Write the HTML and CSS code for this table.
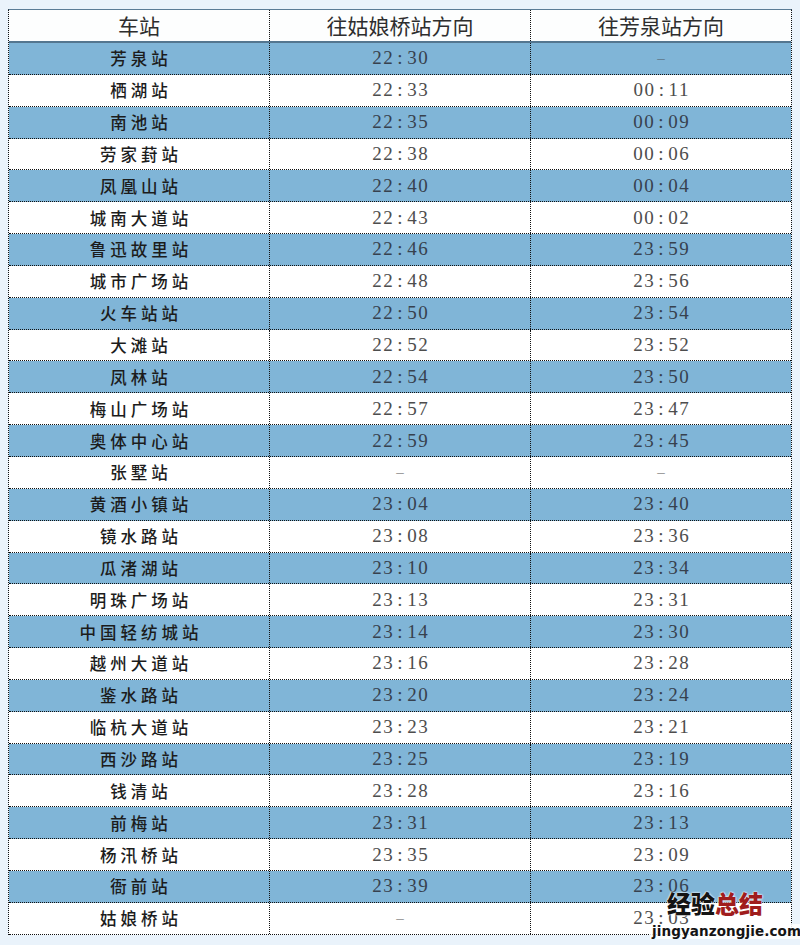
FILE: index.html
```html
<!DOCTYPE html>
<html lang="zh-CN">
<head>
<meta charset="utf-8">
<title>末班车时刻表</title>
<link rel="stylesheet" href="styles.css">
</head>
<body>
<div class="table">
  <div class="row head">
    <div class="cell">车站</div>
    <div class="cell">往姑娘桥站方向</div>
    <div class="cell">往芳泉站方向</div>
  </div>
  <div class="body">
    <div class="row"><div class="cell st">芳泉站</div><div class="cell tm">22<span class="c">:</span>30</div><div class="cell tm dash">–</div></div>
    <div class="row"><div class="cell st">栖湖站</div><div class="cell tm">22<span class="c">:</span>33</div><div class="cell tm">00<span class="c">:</span>11</div></div>
    <div class="row"><div class="cell st">南池站</div><div class="cell tm">22<span class="c">:</span>35</div><div class="cell tm">00<span class="c">:</span>09</div></div>
    <div class="row"><div class="cell st">劳家葑站</div><div class="cell tm">22<span class="c">:</span>38</div><div class="cell tm">00<span class="c">:</span>06</div></div>
    <div class="row"><div class="cell st">凤凰山站</div><div class="cell tm">22<span class="c">:</span>40</div><div class="cell tm">00<span class="c">:</span>04</div></div>
    <div class="row"><div class="cell st">城南大道站</div><div class="cell tm">22<span class="c">:</span>43</div><div class="cell tm">00<span class="c">:</span>02</div></div>
    <div class="row"><div class="cell st">鲁迅故里站</div><div class="cell tm">22<span class="c">:</span>46</div><div class="cell tm">23<span class="c">:</span>59</div></div>
    <div class="row"><div class="cell st">城市广场站</div><div class="cell tm">22<span class="c">:</span>48</div><div class="cell tm">23<span class="c">:</span>56</div></div>
    <div class="row"><div class="cell st">火车站站</div><div class="cell tm">22<span class="c">:</span>50</div><div class="cell tm">23<span class="c">:</span>54</div></div>
    <div class="row"><div class="cell st">大滩站</div><div class="cell tm">22<span class="c">:</span>52</div><div class="cell tm">23<span class="c">:</span>52</div></div>
    <div class="row"><div class="cell st">凤林站</div><div class="cell tm">22<span class="c">:</span>54</div><div class="cell tm">23<span class="c">:</span>50</div></div>
    <div class="row"><div class="cell st">梅山广场站</div><div class="cell tm">22<span class="c">:</span>57</div><div class="cell tm">23<span class="c">:</span>47</div></div>
    <div class="row"><div class="cell st">奥体中心站</div><div class="cell tm">22<span class="c">:</span>59</div><div class="cell tm">23<span class="c">:</span>45</div></div>
    <div class="row"><div class="cell st">张墅站</div><div class="cell tm dash">–</div><div class="cell tm dash">–</div></div>
    <div class="row"><div class="cell st">黄酒小镇站</div><div class="cell tm">23<span class="c">:</span>04</div><div class="cell tm">23<span class="c">:</span>40</div></div>
    <div class="row"><div class="cell st">镜水路站</div><div class="cell tm">23<span class="c">:</span>08</div><div class="cell tm">23<span class="c">:</span>36</div></div>
    <div class="row"><div class="cell st">瓜渚湖站</div><div class="cell tm">23<span class="c">:</span>10</div><div class="cell tm">23<span class="c">:</span>34</div></div>
    <div class="row"><div class="cell st">明珠广场站</div><div class="cell tm">23<span class="c">:</span>13</div><div class="cell tm">23<span class="c">:</span>31</div></div>
    <div class="row"><div class="cell st">中国轻纺城站</div><div class="cell tm">23<span class="c">:</span>14</div><div class="cell tm">23<span class="c">:</span>30</div></div>
    <div class="row"><div class="cell st">越州大道站</div><div class="cell tm">23<span class="c">:</span>16</div><div class="cell tm">23<span class="c">:</span>28</div></div>
    <div class="row"><div class="cell st">鉴水路站</div><div class="cell tm">23<span class="c">:</span>20</div><div class="cell tm">23<span class="c">:</span>24</div></div>
    <div class="row"><div class="cell st">临杭大道站</div><div class="cell tm">23<span class="c">:</span>23</div><div class="cell tm">23<span class="c">:</span>21</div></div>
    <div class="row"><div class="cell st">西沙路站</div><div class="cell tm">23<span class="c">:</span>25</div><div class="cell tm">23<span class="c">:</span>19</div></div>
    <div class="row"><div class="cell st">钱清站</div><div class="cell tm">23<span class="c">:</span>28</div><div class="cell tm">23<span class="c">:</span>16</div></div>
    <div class="row"><div class="cell st">前梅站</div><div class="cell tm">23<span class="c">:</span>31</div><div class="cell tm">23<span class="c">:</span>13</div></div>
    <div class="row"><div class="cell st">杨汛桥站</div><div class="cell tm">23<span class="c">:</span>35</div><div class="cell tm">23<span class="c">:</span>09</div></div>
    <div class="row"><div class="cell st">衙前站</div><div class="cell tm">23<span class="c">:</span>39</div><div class="cell tm">23<span class="c">:</span>06</div></div>
    <div class="row"><div class="cell st">姑娘桥站</div><div class="cell tm dash">–</div><div class="cell tm">23<span class="c">:</span>03</div></div>
  </div>
</div>
<div class="wm">
  <div class="wm-cn"><span class="wm-a">经验</span><span class="wm-b">总结</span></div>
  <div class="wm-en">jingyanzongjie.com</div>
</div>
</body>
</html>
```

FILE: styles.css
```css
html, body {
  margin: 0;
  padding: 0;
}
body {
  background: #eaf3fb;
  width: 800px;
  height: 945px;
  position: relative;
  overflow: hidden;
  font-family: "Noto Sans CJK SC", "Noto Sans", sans-serif;
}
.table {
  margin: 9px 0 0 8px;
  width: 784px;
  box-sizing: border-box;
  border-top: 1px solid #5a7c96;
  border-left: 1px dotted #111;
  border-right: 1px dotted #111;
}
.row {
  display: grid;
  grid-template-columns: 260px 261px 261px;
  box-sizing: border-box;
  height: 31.857px;
  border-bottom: 1px dotted #111;
  background: #ffffff;
}
.row .cell + .cell {
  border-left: 1px dotted #111;
}
.cell {
  display: flex;
  align-items: center;
  justify-content: center;
  white-space: nowrap;
}
.head {
  height: 33px;
  border-bottom: 2px solid #54768f;
  background: #fdfefe;
}
.head .cell {
  font-size: 21px;
  color: #2e2e2e;
  font-weight: 400;
  padding-bottom: 1px;
}
.body .row:nth-child(odd) {
  background: #80b5d7;
}
.st {
  font-size: 16.5px;
  font-weight: 500;
  color: #1c1c1c;
  letter-spacing: 4px;
  padding-left: 4px;
}
.tm {
  font-family: "Liberation Serif", "Times New Roman", serif;
  font-size: 19px;
  color: #4d4d4d;
  letter-spacing: 1.6px;
  padding-left: 1.6px;
}
.tm .c {
  margin: 0 3px;
}
.body .row:nth-child(odd) .tm {
  color: #37414e;
}
.dash {
  color: #8a8a8a;
  font-size: 15px;
}
.body .row:nth-child(odd) .dash {
  color: #5f7788;
}
.wm {
  position: absolute;
  left: 650px;
  top: 889px;
  width: 138px;
  text-align: right;
}
.wm-cn {
  font-size: 24px;
  font-weight: 900;
  line-height: 28px;
  padding-right: 25px;
  text-shadow: 0 0 2px #fff, 0 0 2px #fff;
}
.wm-a {
  color: #141414;
}
.wm-b {
  color: #a01d1d;
}
.wm-en {
  display: inline-block;
  font-family: "DejaVu Sans", sans-serif;
  font-weight: 700;
  font-size: 13.5px;
  line-height: 15px;
  color: #141414;
  background: rgba(255, 255, 255, 0.85);
  padding: 0 2px;
  letter-spacing: 0.1px;
}
```
